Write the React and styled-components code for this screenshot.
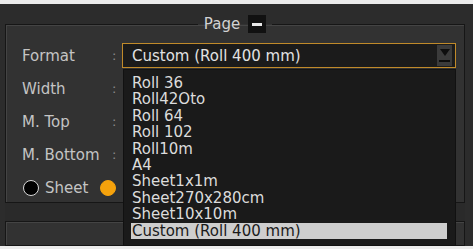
import React from "react";
import styled, { createGlobalStyle } from "styled-components";

const Global = createGlobalStyle`
  html, body { margin: 0; padding: 0; background: #ececec; }
  body { font-family: "DejaVu Sans", sans-serif; }
`;

const Page = styled.div`
  width: 473px;
  height: 249px;
  padding-top: 4px;
  padding-bottom: 3px;
  box-sizing: border-box;
  background: #ececec;
`;

const Panel = styled.div`
  position: relative;
  height: 100%;
  background: #2c2c2c;
  padding: 11px 8px 0 5px;
  box-sizing: border-box;
  display: flex;
  flex-direction: column;
`;

const Group = styled.fieldset`
  margin: 0;
  padding: 6px 0 0 0;
  border: 1px solid #161616;
  box-shadow: inset 1px 1px 0 #444;
  background: #323232;
  height: ${(p) => p.$h}px;
  box-sizing: border-box;
  min-width: 0;
`;

const Legend = styled.legend`
  margin: 0 auto;
  padding: 0 6px;
  display: flex;
  align-items: center;
  gap: 8px;
  color: #d2d2d2;
  font-size: 15px;
`;

const Collapse = styled.span`
  width: 18px;
  height: 18px;
  background: #111;
  display: flex;
  align-items: center;
  justify-content: center;
  &::after {
    content: "";
    width: 10px;
    height: 3px;
    background: #e8e8e8;
  }
`;

const Rows = styled.div`
  display: grid;
  grid-template-columns: 90px 10px 1fr;
  grid-auto-rows: 33px;
  padding: 0 8px 0 16px;
  align-items: center;
  position: relative;
`;

const Label = styled.span`
  color: #c4c4c4;
  font-size: 15px;
`;

const Colon = styled.span`
  color: #8a8a8a;
  font-size: 13px;
`;

const SelectBox = styled.div`
  height: 25px;
  border: 1px solid #c08a2a;
  background: #1b1b1b;
  display: flex;
  align-items: center;
  justify-content: space-between;
  padding: 0 3px 0 9px;
  box-sizing: border-box;
  color: #e2e2e2;
  font-size: 15px;
`;

const ArrowBtn = styled.span`
  width: 15px;
  height: 21px;
  background: #3b3b3b;
  display: flex;
  flex-direction: column;
  align-items: center;
  justify-content: center;
  gap: 4px;
`;

const Tri = styled.span`
  width: 0;
  height: 0;
  border-left: 5px solid transparent;
  border-right: 5px solid transparent;
  border-top: 7px solid #0e0e0e;
`;

const Bar = styled.span`
  width: 11px;
  height: 2px;
  background: #0e0e0e;
`;

const RadioRow = styled.div`
  grid-column: 1 / 4;
  display: flex;
  align-items: center;
  gap: 6px;
  margin-left: 1px;
`;

const Radio = styled.span`
  width: 14px;
  height: 14px;
  border-radius: 50%;
  background: ${(p) => (p.$on ? "#f5a20c" : "#000")};
  border: 1px solid ${(p) => (p.$on ? "#f5a20c" : "#d8d8d8")};
  margin-left: ${(p) => p.$ml || 0}px;
`;

const Band = styled.div`
  height: 23px;
  background: #2a2a2a;
`;

const List = styled.div`
  position: absolute;
  left: 123px;
  top: 65px;
  width: 333px;
  height: 177px;
  background: #1a1a1a;
  border: 1px solid #111;
  box-sizing: border-box;
  padding: 5px 8px 0 7px;
  display: flex;
  flex-direction: column;
`;

const Item = styled.div`
  height: 16.4px;
  line-height: 16px;
  font-size: 15px;
  color: ${(p) => (p.$sel ? "#1a1a1a" : "#dcdcdc")};
  background: ${(p) => (p.$sel ? "#cecece" : "transparent")};
  padding-left: 1px;
  white-space: nowrap;
`;

const items = [
  "Roll 36",
  "Roll42Oto",
  "Roll 64",
  "Roll 102",
  "Roll10m",
  "A4",
  "Sheet1x1m",
  "Sheet270x280cm",
  "Sheet10x10m",
  "Custom (Roll 400 mm)",
];

export default function App() {
  return (
    <>
      <Global />
      <Page>
        <Panel>
          <Group $h={188}>
            <Legend>
              Page <Collapse />
            </Legend>
            <Rows>
              <Label>Format</Label>
              <Colon>:</Colon>
              <SelectBox>
                Custom (Roll 400 mm)
                <ArrowBtn>
                  <Tri />
                  <Bar />
                </ArrowBtn>
              </SelectBox>
              <Label>Width</Label>
              <Colon>:</Colon>
              <span />
              <Label>M. Top</Label>
              <Colon>:</Colon>
              <span />
              <Label>M. Bottom</Label>
              <Colon>:</Colon>
              <span />
              <RadioRow>
                <Radio />
                <Label>Sheet</Label>
                <Radio $on $ml={6} />
              </RadioRow>
            </Rows>
          </Group>
          <Band />
          <Group $h={30} />
          <List>
            {items.map((t) => (
              <Item key={t} $sel={t.startsWith("Custom")}>
                {t}
              </Item>
            ))}
          </List>
        </Panel>
      </Page>
    </>
  );
}
